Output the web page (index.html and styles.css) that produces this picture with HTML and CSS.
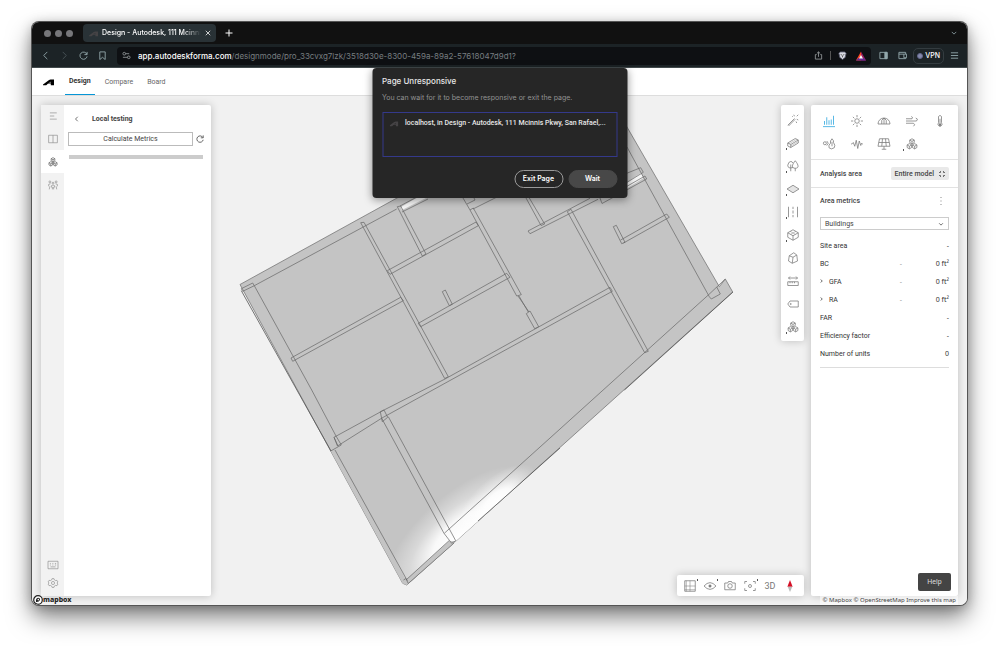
FILE: index.html
```html
<!DOCTYPE html>
<html lang="en">
<head>
<meta charset="utf-8">
<title>Design - Autodesk, 111 Mcinnis Pkwy, San Rafael</title>
<link rel="stylesheet" href="styles.css">
</head>
<body>
<svg class="defs" aria-hidden="true">
  <defs>
    <symbol id="logo" viewBox="0 0 24 16"><path d="M0 13.500L12.500 4q2-1.500 4-1.500H24v12.500h-7v-4h-4.500q-1 0-2 1L7 15H0zM12.500 9H17V7.500z" fill="currentColor" stroke="none"/></symbol>
    <symbol id="cubes" viewBox="0 0 16 16"><path d="M8 1l3 1.700v3.300L8 8 5 6V2.700zM5 2.700l3 1.800 3-1.800M8 4.500V8M4.500 7.500l3 1.700v3.500l-3 1.800-3-1.800V9.200zM1.500 9.200l3 1.800 3-1.800M4.500 11v3.500M11.500 7.500l3 1.700v3.500l-3 1.800-3-1.800V9.200zM8.500 9.200l3 1.800 3-1.800M11.500 11v3.500"/></symbol>
  </defs>
</svg>
<div class="window">
  <div class="tabstrip">
    <span class="lights"><i></i><i></i><i></i></span>
    <div class="tab"><svg class="favicon"><use href="#logo"/></svg><span class="tab-title">Design - Autodesk, 111 Mcinni</span><button class="bare" aria-label="Close tab"><svg class="ic6" viewBox="0 0 8 8"><path d="M1 1l6 6M7 1l-6 6"/></svg></button></div>
    <button class="bare newtab" aria-label="New tab"><svg class="ic8" viewBox="0 0 8 8"><path d="M4 .5v7M.5 4h7"/></svg></button>
    <button class="bare tabs-menu" aria-label="Search tabs"><svg class="ic6" viewBox="0 0 8 8"><path d="M1 2.500l3 3 3-3"/></svg></button>
  </div>
  <div class="toolbar">
    <button class="bare" aria-label="Back"><svg class="ic9" viewBox="0 0 10 10"><path d="M7 1L3 5l4 4"/></svg></button>
    <button class="bare dim" aria-label="Forward"><svg class="ic9" viewBox="0 0 10 10"><path d="M3 1l4 4-4 4"/></svg></button>
    <button class="bare" aria-label="Reload"><svg class="ic9" viewBox="0 0 10 10"><path d="M8.700 3.500A4 4 0 1 0 9 6M9 1v3H6"/></svg></button>
    <button class="bare" aria-label="Bookmark"><svg class="ic9" viewBox="0 0 10 10"><path d="M2 1h6v8.500L5 7 2 9.500z"/></svg></button>
    <div class="address">
      <svg class="ic9 site" viewBox="0 0 10 10"><circle cx="2.500" cy="3" r="1.500"/><circle cx="7.500" cy="7" r="1.500"/><path d="M4 3h4M1 7h5"/></svg>
      <span class="url"><b>app.autodeskforma.com</b>/designmode/pro_33cvxg7lzk/3518d30e-8300-459a-89a2-57618047d9d1?</span>
      <button class="bare" aria-label="Share"><svg class="ic9" viewBox="0 0 10 10"><path d="M3 4H1.500v5h7V4H7M5 6.500V1M3.200 2.700L5 1l1.800 1.700"/></svg></button>
      <span class="bar"></span>
      <button class="bare" aria-label="Shields"><svg class="ic9" viewBox="0 0 10 10"><path d="M2.500 1h5L9 2.500 8 7 5 9.500 2 7 1 2.500z" fill="#d8d9e2" stroke="#55576b"/><path d="M3 4l1.500.5M7 4l-1.500.5M5 5v2" stroke="#555"/></svg></button>
      <button class="bare rewards" aria-label="Rewards"><svg class="ic10" viewBox="0 0 10 10"><path d="M5 .5L0 9.500h5z" fill="#ff4724" stroke="none"/><path d="M5 .5l5 9H5z" fill="#9e1f63" stroke="none"/><path d="M0 9.500h10L7.500 7h-5z" fill="#662d91" stroke="none"/><path d="M5 4L3 7.500h4z" fill="#fff" stroke="none"/></svg></button>
    </div>
    <button class="bare" aria-label="Sidebar"><svg class="ic9" viewBox="0 0 10 10"><path d="M1 1.500h8v7H1z"/><path d="M6.500 1.500H9v7H6.500z" fill="currentColor"/></svg></button>
    <button class="bare" aria-label="Wallet"><svg class="ic9" viewBox="0 0 10 10"><path d="M8.500 3.500v-2H1v7h7.500v-1M1 3.500h8.500v4H6.500v-4"/></svg></button>
    <button class="vpn"><i></i>VPN</button>
    <button class="bare" aria-label="Menu"><svg class="ic9" viewBox="0 0 10 10"><path d="M1 2h8M1 5h8M1 8h8"/></svg></button>
  </div>
  <header class="app-header">
    <svg class="brand"><use href="#logo"/></svg>
    <nav><a class="active" href="#design">Design</a><a href="#compare">Compare</a><a href="#board">Board</a></nav>
  </header>
  <main class="stage">
    <svg class="plan" viewBox="32 96 935 509" preserveAspectRatio="xMidYMid slice" aria-label="Floor plan">
      <defs>
        <clipPath id="shape"><path d="M240 284.500L397 198 560 108H616L719.300 286.700 725.300 279 732.700 292 455.700 541.300 406.700 585 402.700 583.300 330.700 451z"/></clipPath>
        <radialGradient id="glow"><stop offset="0" stop-color="#fff"/><stop offset=".35" stop-color="#fff" stop-opacity=".9"/><stop offset=".65" stop-color="#fff" stop-opacity=".35"/><stop offset="1" stop-color="#fff" stop-opacity="0"/></radialGradient>
      </defs>
      <path fill="#c4c4c4" stroke="#777" stroke-width=".8" d="M240 284.500L397 198 560 108H616L719.300 286.700 725.300 279 732.700 292 455.700 541.300 406.700 585 402.700 583.300 330.700 451z"/>
      <g clip-path="url(#shape)" stroke="none">
        <ellipse cx="0" cy="0" rx="96" ry="42" fill="url(#glow)" transform="translate(460 537) rotate(-42)"/>
        <ellipse cx="0" cy="0" rx="50" ry="24" fill="url(#glow)" transform="translate(498 502) rotate(-42)"/>
      </g>
      <path fill="#c4c4c4" stroke="none" d="M406 580L449 541 455.700 541.300 406.700 585 402.700 583.300 330.700 451 335 450z"/>
      <path fill="#f4f4f4" stroke="none" d="M401 207L413 200 430 191 426 198 402 210zM626 183L641 173 643.500 178 626 189z"/>
      <g class="wall">
        <path d="M241.300 288.700L252.700 283 254.300 285.700 242.700 291.300zM254.300 285.700L362.700 227.300 396.700 209M254.300 285.700L311.700 390 336 436 341.300 445"/>
        <path d="M360.700 222.700L364 222.300 448.300 376.700 444.700 378.500zM291 358L400.700 297.300 403.300 300.700 292.700 361.300zM387.300 270.700L476 222 478.300 225.700 390 274.300zM397.300 206.700L400.700 206 426 254 422.300 256zM400 206L430 190M402 212L428 199"/>
        <path d="M418.300 323.300L506.700 273.300 510 277.300 420.700 326.700zM442.300 291.700L445.300 290 452.300 304.300 449.300 305.700zM463 198L470 210 516.700 296 521.300 294.700 473.300 208 470 210M467 204L475 200 473 196M473 209L497 197M519 296L528.300 312M518 296L529 312M526.300 313.700L530 311 538.700 326.700 534.700 328.700z"/>
        <path d="M334 437.300L380.300 412 384 410 445 379 610 287.300 612.300 291.300 469 370 382 418 337.500 446zM334 437.300L338 446M330.700 451L341.300 445M380.300 411.700L384 410 387.700 417.300 382.300 421.700zM381.700 418.300L444 533.300 451.700 543.300 455.700 540.700 388.300 416.700"/>
        <path d="M335 450L407.300 580.700M406 580L449 540.700M407.700 584L454 543M403.500 580L406 578.500 408 583M444.300 533.300L560 429 708.300 295 725.300 279M567.300 211.700L571 209.300 648.300 351.300 644.700 352.700z"/>
        <path d="M590 198.300L528 231 530 233.700 598 199.300M526 198L541 225.500 544.700 224 529.300 198M613.300 226.700L616.300 225.300 625 242.300 621.700 243.700zM620.700 240L666.700 214 669.300 217.300 623.500 243M600 198L602 203.500 646.700 179 645 176 610 196M626.700 173.300L640.700 167.700 643.300 172.300 626 183M627 147L639.500 170 709.300 296.700 711.300 299 720.300 294 716.700 287"/>
      </g>
      <path class="edge" d="M241.300 290.700L331 451M733 292L624.500 390M560 448L478 521"/>
    </svg>
    <section class="panel left" aria-label="Local testing">
      <div class="rail">
        <button aria-label="Layers"><svg class="ic10" viewBox="0 0 16 16"><path d="M3 3h11M3 8h7M3 13h11"/></svg></button>
        <button aria-label="Library"><svg class="ic10" viewBox="0 0 16 16"><path d="M1 2h14v12H1zM8 2v12"/></svg></button>
        <button class="on" aria-label="Extensions"><svg class="ic10"><use href="#cubes"/></svg></button>
        <button aria-label="Collaborators"><svg class="ic10" viewBox="0 0 16 16"><circle cx="3" cy="3" r="1.500"/><circle cx="8" cy="5" r="1.500"/><circle cx="13" cy="3" r="1.500"/><path d="M1 10V7l3-1M2 15l1-5M15 10V7l-3-1M14 15l-1-5M5.500 12V9l2.500-1 2.500 1v3M7 15v-4M9 15v-4"/></svg></button>
        <button class="low" aria-label="Shortcuts"><svg class="ic10" viewBox="0 0 16 16"><path d="M0 2h16v12H0zM3 5.500h1.500M7 5.500h1.500M11 5.500h2M3 8h1.500M7 8h1.500M11 8h2M4 11h8"/></svg></button>
        <button aria-label="Settings"><svg class="ic10" viewBox="0 0 16 16"><path d="M6.500 1h3l.6 2 2.200 1.200 2-.5 1.500 2.600L14.300 8l1.500 1.700-1.500 2.600-2-.5-2.200 1.200-.6 2h-3l-.6-2-2.200-1.200-2 .5L.2 9.700 1.700 8 .2 6.300l1.500-2.600 2 .5L5.900 3z"/><circle cx="8" cy="8" r="2.500"/></svg></button>
      </div>
      <div class="local">
        <div class="local-head"><button class="bare" aria-label="Back to extensions"><svg class="ic6" viewBox="0 0 8 8"><path d="M5 1L2 4l3 3"/></svg></button><h2>Local testing</h2></div>
        <div class="calc"><button class="metrics">Calculate Metrics</button><button class="bare" aria-label="Refresh"><svg class="ic8" viewBox="0 0 10 10"><path d="M8.500 3A4 4 0 1 0 9 6M9 .5v3H6"/></svg></button></div>
        <div class="strip"></div>
      </div>
    </section>
    <div class="tools">
      <div class="panel vertical">
        <button class="more0" aria-label="Generate"><svg class="ic12" viewBox="0 0 16 16"><path d="M1 15L10 6M2 16l9-9M9 1l1 2M13 3l2-2M13 7l2 1M12 10l1 2M7 3l1 1"/></svg></button>
        <button aria-label="Building"><svg class="ic12" viewBox="0 0 16 16"><path d="M1 8l10-6 4 2v4L5 14l-4-2zM1 8l4 2 10-6M5 10v4"/><path stroke-width=".5" d="M3 9l10-6M5 12l10-6"/></svg></button>
        <button aria-label="Vegetation"><svg class="ic12" viewBox="0 0 16 16"><path d="M8 10Q1 12 1 7q1-5 4-5 2 0 3 2M5 6v9M11 1c5 6 5 10 0 10s-5-4 0-10zM11 11v4"/></svg></button>
        <button aria-label="Area"><svg class="ic12" viewBox="0 0 16 16"><path fill="#e5e5e5" d="M8 3l8 5-8 5-8-5z"/></svg></button>
        <button aria-label="Road"><svg class="ic12" viewBox="0 0 16 16"><path d="M2 1v14M14 1v14M8 1v3M8 6v4M8 12v3"/></svg></button>
        <button aria-label="Volume"><svg class="ic12" viewBox="0 0 16 16"><path d="M8 1l7 4v6l-7 4-7-4V5zM1 5l7 4 7-4M8 9v6"/><path stroke-width=".6" d="M4 3l7 4M12 3L5 7"/></svg></button>
        <button class="more0" aria-label="Block"><svg class="ic12" viewBox="0 0 16 16"><path d="M3 5l6-4 4 3 1 8-7 3-5-3zM3 5l5 2 5-3M8 7l-1 8"/></svg></button>
        <button class="more0" aria-label="Measure"><svg class="ic12" viewBox="0 0 16 16"><path d="M1 9h14v5H1zM4 9v2M7 9v2M10 9v2M2 4h12M4 2L2 4l2 2M12 2l2 2-2 2"/></svg></button>
        <button class="more0" aria-label="Label"><svg class="ic12" viewBox="0 0 16 16"><path d="M4 4h11v8H4L1 8z"/><circle cx="5" cy="8" r=".7"/></svg></button>
        <button aria-label="Extensions toolbox"><svg class="ic12"><use href="#cubes"/></svg></button>
      </div>
      <div class="panel horizontal">
        <button class="corner" aria-label="Grid"><svg class="ic12" viewBox="0 0 16 16"><path d="M1 1h14v14H1z"/><path stroke-width=".7" d="M8 1v14M1 8h14M3 1v14M1 13h14"/></svg></button>
        <button class="corner" aria-label="Visibility"><svg class="ic12" viewBox="0 0 16 16"><path d="M0 8q8-9 16 0-8 9-16 0z"/><circle cx="8" cy="8" r="1.500" fill="currentColor"/></svg></button>
        <button aria-label="Camera"><svg class="ic12" viewBox="0 0 16 16"><path d="M1 4h4l1-2h4l1 2h4v9H1z"/><circle cx="8" cy="8" r="3"/></svg></button>
        <button class="corner" aria-label="Focus"><svg class="ic12" viewBox="0 0 16 16"><path d="M1 5V2h3M12 2h3v3M15 11v3h-3M4 14H1v-3"/><circle cx="8" cy="8" r="2"/></svg></button>
        <button>3D</button>
        <button aria-label="North"><svg class="ic12" viewBox="0 0 16 16"><path d="M8 0l3.500 9h-7z" fill="#d50f25" stroke="none"/><path d="M8 16l3-7H5z" fill="#bbb" stroke="none"/></svg></button>
      </div>
    </div>
    <aside class="panel analysis">
      <div class="analyses">
        <button class="blue" aria-label="Area metrics"><svg class="ic12" viewBox="0 0 16 16"><path d="M0 15.500h16M2 8v5M5 3v10M8 7v6M11 6v7M14 1v12"/></svg></button>
        <button aria-label="Sun hours"><svg class="ic12" viewBox="0 0 16 16"><circle cx="8" cy="8" r="3"/><path d="M8 0v3M8 13v3M0 8h3M13 8h3M2.500 2.500l2 2M11.500 11.500l2 2M2.500 13.500l2-2M11.500 4.500l2-2"/></svg></button>
        <button aria-label="Daylight"><svg class="ic12" viewBox="0 0 16 16"><path d="M0 12a8 8 0 0 1 16 0zM8 4v8M5 12V7l3-3 3 3v5"/></svg></button>
        <button aria-label="Wind"><svg class="ic12" viewBox="0 0 16 16"><path d="M0 5h8q2-2-1-3M0 8h14q3-3-1-4M0 11h10q3 2 0 4"/></svg></button>
        <button aria-label="Microclimate"><svg class="ic12" viewBox="0 0 16 16"><path d="M6 10V2q2-3 4 0v8q2 3-1 5H7q-3-2-1-5z"/><path d="M8 5v8M7 12h2v2H7z" fill="currentColor"/></svg></button>
        <button aria-label="Embodied carbon"><svg class="ic12" viewBox="0 0 16 16"><circle cx="2.500" cy="7" r="2"/><path d="M5 4l2 3-2 3M12 1q3 3 2 5 3 4 1 7-4 3-7 0-1-4 2-6-1-3 2-6zM12 5v6"/></svg></button>
        <button aria-label="Noise"><svg class="ic12" viewBox="0 0 16 16"><path d="M0 8h1l2-2 2 5L7 3l2 11 2-10 2 6 1-3 1 1h1"/></svg></button>
        <button aria-label="Solar energy"><svg class="ic12" viewBox="0 0 16 16"><path d="M2 1h12l2 10H0zM1 6h14M6 1L5 11M10 1l1 10M8 11v4M5 15h6"/></svg></button>
        <button class="more" aria-label="Extension analyses"><svg class="ic12"><use href="#cubes"/></svg></button>
      </div>
      <div class="area-row"><span>Analysis area</span><button class="model">Entire model<svg class="ic6" viewBox="0 0 8 8"><path d="M0 2h2V0M6 0v2h2M8 6H6v2M2 8V6H0"/></svg></button></div>
      <div class="metrics-block">
        <div class="metrics-head"><h2>Area metrics</h2><button class="bare" aria-label="More options"><svg class="ic8 dots" viewBox="0 0 8 8"><path d="M3.500 0h1v1h-1zM3.500 3.500h1v1h-1zM3.500 7h1v1h-1z"/></svg></button></div>
        <div class="select"><select aria-label="Metric group"><option>Buildings</option></select><svg class="ic6" viewBox="0 0 8 8"><path d="M1.500 3L4 5.500 6.500 3"/></svg></div>
        <table>
          <tr><th scope="row">Site area</th><td></td><td>-</td></tr>
          <tr><th scope="row">BC</th><td>-</td><td>0 ft²</td></tr>
          <tr><th scope="row"><svg class="ic6" viewBox="0 0 8 8"><path d="M1 2l2 2-2 2"/></svg>GFA</th><td>-</td><td>0 ft²</td></tr>
          <tr><th scope="row"><svg class="ic6" viewBox="0 0 8 8"><path d="M1 2l2 2-2 2"/></svg>RA</th><td>-</td><td>0 ft²</td></tr>
          <tr><th scope="row">FAR</th><td></td><td>-</td></tr>
          <tr><th scope="row">Efficiency factor</th><td></td><td>-</td></tr>
          <tr><th scope="row">Number of units</th><td></td><td>0</td></tr>
        </table>
      </div>
      <button class="help">Help</button>
    </aside>
    <div class="mapbox"><svg class="ic10" viewBox="0 0 10 10"><circle cx="5" cy="5" r="4.300" fill="#fff" stroke="#222" stroke-width="1.200"/><path d="M3 7q-.5-4 2-4.300Q7.500 3 7 5 6 7.300 3 7z" fill="#222" stroke="none"/><circle cx="5.300" cy="4.600" r=".8" fill="#fff" stroke="none"/></svg><span>mapbox</span></div>
    <div class="credits"><a href="#mapbox">© Mapbox</a> <a href="#osm">© OpenStreetMap</a> <a href="#improve">Improve this map</a></div>
  </main>
  <div class="dialog" role="dialog" aria-labelledby="dlg">
    <h1 id="dlg">Page Unresponsive</h1>
    <p>You can wait for it to become responsive or exit the page.</p>
    <div class="pages"><svg class="favicon"><use href="#logo"/></svg><span>localhost, in Design - Autodesk, 111 Mcinnis Pkwy, San Rafael,...</span></div>
    <div class="actions"><button>Exit Page</button><button class="wait">Wait</button></div>
  </div>
</div>
</body>
</html>
```
FILE: styles.css
```css
* { box-sizing: border-box; }
body {
  margin: 0;
  padding: 22px 32px 42px;
  min-height: 100vh;
  display: flex;
  background: #fff;
  font: 7px/10px Roboto, sans-serif;
  color: #444;
}
button, select { font: inherit; color: inherit; margin: 0; }
button { border: 0; background: none; padding: 0; display: flex; align-items: center; justify-content: center; }
a { color: inherit; text-decoration: none; }
h1, h2, p { margin: 0; font: inherit; }
svg { fill: none; stroke: currentColor; flex: none; display: block; }
.defs { position: absolute; width: 0; height: 0; }
.ic6 { width: 6px; height: 6px; }
.ic8 { width: 8px; height: 8px; }
.ic9 { width: 9px; height: 9px; }
.ic10 { width: 10px; height: 10px; }
.ic12 { width: 12px; height: 12px; }

.window {
  position: relative;
  flex: 1;
  display: flex;
  flex-direction: column;
  border-radius: 7px;
  box-shadow: 0 0 0 1px #555, 0 12px 24px rgba(0, 0, 0, .5), 0 2px 12px rgba(0, 0, 0, .25);
}
.tabstrip {
  height: 22px;
  display: flex;
  align-items: center;
  background: #111;
  color: #fff;
  border-radius: 7px 7px 0 0;
  padding: 0 10px 0 12px;
  font-family: Inter, sans-serif;
}
.lights { display: flex; gap: 4px; margin-right: 10px; }
.lights i { width: 7px; height: 7px; border-radius: 50%; background: #77777a; }
.tab { display: flex; align-items: center; gap: 4px; width: 133px; height: 18px; background: #293236; border-radius: 4px; padding: 0 5px 0 6px; font-weight: 500; }
.favicon { width: 9px; height: 7px; color: #454345; }
.tab-title { flex: 1; white-space: nowrap; mask-image: linear-gradient(90deg, #000 82%, transparent); }
.newtab { margin-left: 9px; }
.tabs-menu { margin-left: auto; color: #9fb4b9; }
.toolbar {
  height: 24px;
  display: flex;
  align-items: center;
  gap: 10px;
  padding: 0 8px 0 9px;
  background: #1c2326;
  border-bottom: 1px solid #424a4c;
  color: #93a8ac;
  font-family: Inter, sans-serif;
}
.dim { color: #4c5659; }
.address { flex: 1; min-width: 0; height: 18px; display: flex; align-items: center; gap: 7px; padding: 0 5px; margin-right: -2px; background: #0e1013; border-radius: 4px; color: #8d9294; }
.url { flex: 1; overflow: hidden; white-space: nowrap; font-size: 8px; color: #777d80; }
.url b { color: #fff; font-weight: 500; }
.bar { width: 1px; height: 9px; background: #555; }
.rewards { margin-left: 2px; }
.vpn { gap: 2px; height: 16px; padding: 0 3px; margin: 0 -4px; border: 1px solid #343c40; border-radius: 5px; color: #fff; font-weight: 500; }
.vpn i { width: 6px; height: 6px; border-radius: 50%; background: #868aac; border: 1px solid #62678c; }

.app-header { height: 28px; display: flex; align-items: stretch; background: #fff; padding-left: 11px; border-bottom: 1px solid #ddd; }
.brand { width: 11px; height: 8px; color: #000; align-self: center; }
nav { display: flex; margin-left: 11px; gap: 6px; }
nav a { display: flex; align-items: center; padding: 0 4px; color: #666; }
nav .active { color: #333; font-weight: 700; border-bottom: 1px solid #0696d7; }

.stage { position: relative; flex: 1; display: flex; gap: 7px; padding: 9px; background: #f1f1f1; border-radius: 0 0 7px 7px; overflow: hidden; }
.plan { position: absolute; inset: 0; width: 100%; height: 100%; }
.wall { stroke: #666; stroke-width: .7; }
.edge { stroke: #555; stroke-width: .8; }
.panel { position: relative; background: #fff; border-radius: 2px; box-shadow: 0 0 8px rgba(0, 0, 0, .22); color: #666; }
.left { width: 170px; display: flex; }
.rail { width: 23px; display: flex; flex-direction: column; background: #f2f2f2; padding-bottom: 7px; color: #858585; }
.rail button { width: 100%; height: 23px; }
.rail button:first-child { height: 22px; }
.rail .on { background: #fff; color: #555; }
.rail .low { margin-top: auto; }
.rail button:last-child { height: 13px; }
.rail svg, .vertical svg, .horizontal svg, .analyses svg { overflow: visible; }
.local { flex: 1; padding: 8px 7px 0 4px; color: #444; }
.local-head { display: flex; align-items: center; gap: 12px; height: 11px; padding-left: 6px; }
.local-head h2 { font-weight: 700; color: #444; }
.calc { display: flex; align-items: center; gap: 3px; margin-top: 8px; }
.metrics { flex: 1; height: 14px; border: 1px solid #bbb; }
.strip { height: 4px; margin: 9px 1px 0; background: #ccc; }

.tools { flex: 1; display: flex; flex-direction: column; align-items: flex-end; justify-content: space-between; }
.vertical { width: 23px; padding: 3px 0; display: flex; flex-direction: column; color: #777; }
.vertical button { position: relative; width: 100%; height: 23px; }
.vertical button::after, .corner::after, .more::after { content: ""; position: absolute; left: 5px; bottom: 4px; width: 1px; height: 2px; background: #555; }
.vertical .more0::after { display: none; }
.horizontal { display: flex; height: 21px; padding: 0 4px 0 3px; }
.horizontal button { position: relative; width: 20px; font-size: 9px; color: #777; }
.horizontal .corner::after { left: 17px; bottom: 15px; }

.analysis { width: 147px; display: flex; flex-direction: column; color: #444; }
.analyses { display: grid; grid-template-columns: repeat(5, 1fr); grid-auto-rows: 23px; padding: 4px; height: 55px; border-bottom: 1px solid #e2e2e2; color: #777; }
.analyses button { position: relative; }
.analyses .blue { color: #20a0dc; }
.area-row { height: 28px; display: flex; align-items: center; justify-content: space-between; padding: 0 9px; border-bottom: 1px solid #e2e2e2; font-weight: 500; }
.model { height: 13px; gap: 5px; padding: 0 4px; background: #e9e9e9; border-radius: 2px; }
.metrics-block { padding: 8px 9px; }
.metrics-head { display: flex; justify-content: space-between; padding-right: 4px; font-weight: 500; height: 10px; }
.dots path { fill: #888; stroke: none; }
.select { position: relative; margin-top: 11px; }
select { appearance: none; width: 100%; height: 13px; padding: 0 4px; border: 1px solid #ccc; border-radius: 0; background: #fff; display: block; }
.select svg { position: absolute; right: 5px; top: 4px; }
table { width: 100%; margin-top: 7px; border-collapse: collapse; border-bottom: 1px solid #ddd; color: #333; }
table::after { content: ""; display: block; height: 4px; }
tr { height: 18px; }
th, td { padding: 0; font-weight: 400; text-align: right; }
td { font-family: "Noto Sans", sans-serif; }
th { text-align: left; width: 72px; }
th svg { display: inline-block; margin-right: 3px; }
td:nth-child(2) { width: 10px; color: #999; }
.help { margin: auto 7px 5px auto; width: 33px; height: 18px; border-radius: 2px; background: #444; color: #ddd; }
.mapbox { position: absolute; left: 1px; bottom: 0; display: flex; align-items: center; color: #222; font: 800 7px/10px "Noto Sans", sans-serif; }
.credits { position: absolute; right: 9px; bottom: 0; font: 6px/9px "Noto Sans", sans-serif; padding: 0 2px; background: rgba(255, 255, 255, .5); }

.dialog { position: absolute; top: 46px; left: 50%; transform: translateX(-50%); width: 255px; padding: 7px 10px 10px; background: #262626; border-radius: 4px; box-shadow: 0 2px 8px rgba(0, 0, 0, .4); color: #e8e8e8; font-family: Inter, sans-serif; }
.dialog h1 { font-size: 8px; line-height: 12px; font-weight: 500; }
.dialog p { margin: 5px 0 9px; color: #929292; line-height: 11px; }
.pages { display: flex; gap: 7px; height: 45px; padding: 5px 6px; border: 1px solid #34398b; font-family: Roboto, sans-serif; font-weight: 500; }
.pages svg { margin-top: 2px; }
.pages span { white-space: nowrap; }
.actions { display: flex; justify-content: flex-end; gap: 5px; margin-top: 13px; }
.actions button { width: 49px; height: 18px; border: 1px solid #999; border-radius: 9px; color: #fff; font-weight: 600; }
.actions .wait { background: #484848; border-color: #484848; }
```
